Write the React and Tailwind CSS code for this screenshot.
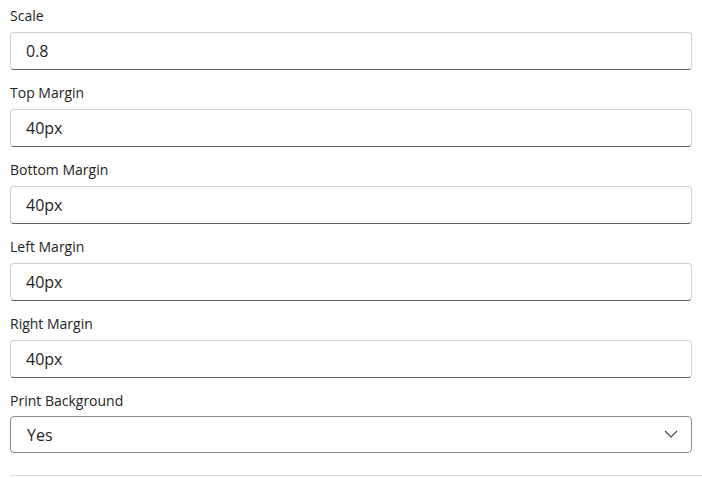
import React, { useState } from "react";

const fields = [
  { label: "Scale", value: "0.8" },
  { label: "Top Margin", value: "40px" },
  { label: "Bottom Margin", value: "40px" },
  { label: "Left Margin", value: "40px" },
  { label: "Right Margin", value: "40px" },
];

const Field = ({ label, value }) => {
  const [val, setVal] = useState(value);
  return (
    <div className="flex flex-col">
      <label className="text-[14px] leading-5 text-[#242424] mb-[6px]">{label}</label>
      <input
        value={val}
        onChange={(e) => setVal(e.target.value)}
        className="h-[38px] w-full rounded-[4px] border border-[#d1d1d1] border-b-[#616161] bg-white pl-[15px] text-[16px] text-[#242424] outline-none"
      />
    </div>
  );
};

export default function App() {
  return (
    <div className="bg-white w-[702px] h-[478px] overflow-hidden pt-[6px] pl-[10px] font-['Segoe_UI','Open_Sans',sans-serif]">
      <div className="flex flex-col gap-[13px] pr-[10px]">
        {fields.map((f) => (
          <Field key={f.label} label={f.label} value={f.value} />
        ))}
        <div className="flex flex-col">
          <label className="text-[14px] leading-5 text-[#242424] mb-[5px]">Print Background</label>
          <div className="relative h-[37px] w-full rounded-[4px] border border-[#8a8a8a] bg-white flex items-center pl-[16px] text-[16px] text-[#242424]">
            Yes
            <svg className="absolute right-[13px] top-[13px]" width="14" height="8" viewBox="0 0 14 8" fill="none">
              <path d="M1 1L7 7L13 1" stroke="#424242" strokeWidth="1.1" />
            </svg>
          </div>
        </div>
      </div>
      <div className="mt-[22px] h-px bg-[#e0e0e0]" />
    </div>
  );
}
